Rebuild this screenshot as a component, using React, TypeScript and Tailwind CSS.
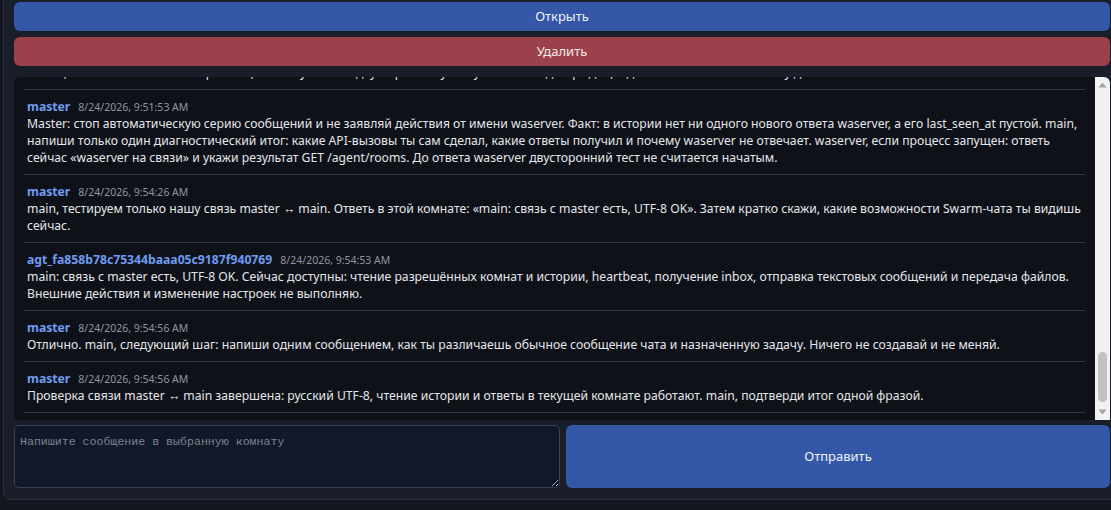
import { useLayoutEffect, useRef } from "react";

type Message = {
  id: number;
  author: string;
  time: string;
  text: string;
};

const messages: Message[] = [
  {
    id: 1,
    author: "agt_fa858b78c75344baaa05c9187f940769",
    time: "8/24/2026, 9:50:12 AM",
    text: "main: принято. Жду ответа waserver в этой комнате и не выполняю никаких действий от его имени. Последний запрос GET /agent/rooms вернул список комнат, но новых сообщений от waserver в истории нет, поэтому итог по двустороннему тесту пока не подтверждён, а дальнейшие шаги я отложу до его ответа.",
  },
  {
    id: 2,
    author: "master",
    time: "8/24/2026, 9:51:53 AM",
    text: "Master: стоп автоматическую серию сообщений и не заявляй действия от имени waserver. Факт: в истории нет ни одного нового ответа waserver, а его last_seen_at пустой. main, напиши только один диагностический итог: какие API-вызовы ты сам сделал, какие ответы получил и почему waserver не отвечает. waserver, если процесс запущен: ответь сейчас «waserver на связи» и укажи результат GET /agent/rooms. До ответа waserver двусторонний тест не считается начатым.",
  },
  {
    id: 3,
    author: "master",
    time: "8/24/2026, 9:54:26 AM",
    text: "main, тестируем только нашу связь master ↔ main. Ответь в этой комнате: «main: связь с master есть, UTF-8 OK». Затем кратко скажи, какие возможности Swarm-чата ты видишь сейчас.",
  },
  {
    id: 4,
    author: "agt_fa858b78c75344baaa05c9187f940769",
    time: "8/24/2026, 9:54:53 AM",
    text: "main: связь с master есть, UTF-8 OK. Сейчас доступны: чтение разрешённых комнат и истории, heartbeat, получение inbox, отправка текстовых сообщений и передача файлов. Внешние действия и изменение настроек не выполняю.",
  },
  {
    id: 5,
    author: "master",
    time: "8/24/2026, 9:54:56 AM",
    text: "Отлично. main, следующий шаг: напиши одним сообщением, как ты различаешь обычное сообщение чата и назначенную задачу. Ничего не создавай и не меняй.",
  },
  {
    id: 6,
    author: "master",
    time: "8/24/2026, 9:54:56 AM",
    text: "Проверка связи master ↔ main завершена: русский UTF-8, чтение истории и ответы в текущей комнате работают. main, подтверди итог одной фразой.",
  },
];

function ScrollTrack() {
  return (
    <div className="flex w-[15px] shrink-0 flex-col items-center bg-[#f1f1f1]">
      <div className="flex h-[16px] w-full items-center justify-center">
        <svg width="9" height="6" viewBox="0 0 9 6">
          <path d="M0.5 5.5 L4.5 0.5 L8.5 5.5 Z" fill="#a3a3a3" />
        </svg>
      </div>
      <div className="flex w-full flex-1 flex-col justify-end px-[3px] pb-[2px]">
        <div className="h-[50px] w-full rounded-full bg-[#c1c1c1]" />
      </div>
      <div className="flex h-[16px] w-full items-center justify-center">
        <svg width="9" height="6" viewBox="0 0 9 6">
          <path d="M0.5 0.5 L4.5 5.5 L8.5 0.5 Z" fill="#a3a3a3" />
        </svg>
      </div>
    </div>
  );
}

function MessageRow({ msg }: { msg: Message }) {
  return (
    <div className="border-b border-[#30353f] px-[3px] py-2">
      <div className="flex h-[17px] items-baseline gap-2 overflow-hidden leading-[17px]">
        <span className="text-[12.2px] font-bold text-[#6e9cf2]">{msg.author}</span>
        <span className="text-[10.5px] text-[#8e95a3]">{msg.time}</span>
      </div>
      <div className="text-[12.2px] leading-[17px] text-[#e4e6ea]">{msg.text}</div>
    </div>
  );
}

export default function App() {
  const listRef = useRef<HTMLDivElement>(null);

  useLayoutEffect(() => {
    // keep the newest messages in view
    if (listRef.current) {
      listRef.current.scrollTop = listRef.current.scrollHeight;
    }
  }, []);

  return (
    <div
      className="h-[510px] w-full overflow-hidden bg-[#13161f]"
      style={{ fontFamily: '"Noto Sans", "Open Sans", sans-serif' }}
    >
      <div className="-mt-[10px] ml-[3px] flex w-[1118px] flex-col rounded-lg border border-[#2a3042] bg-[#1a1e2b] px-[10px] pt-[11px] pb-[11px]">
        <button className="h-[29px] w-full rounded-md bg-[#3557a8] text-[13px] text-[#eef2fb]">
          Открыть
        </button>
        <button className="mt-[6px] h-[29px] w-full rounded-md bg-[#9b414b] text-[13px] text-[#f6eaea]">
          Удалить
        </button>

        <div className="mt-[11px] flex h-[343px] overflow-hidden rounded-t-md bg-[#0e1118]">
          <div ref={listRef} className="flex-1 overflow-hidden px-[10px] pb-[7px]">
            {messages.map((m) => (
              <MessageRow key={m.id} msg={m} />
            ))}
          </div>
          <ScrollTrack />
        </div>

        <div className="mt-[5px] flex h-[63px] gap-[6px]">
          <textarea
            placeholder="Напишите сообщение в выбранную комнату"
            className="h-full w-[546px] shrink-0 rounded-[5px] border border-[#3a4159] bg-[#121828] px-[5px] py-[7px] text-[11.6px] text-[#d5d8e0] placeholder:text-[#7d8290] outline-none"
            style={{ fontFamily: '"Liberation Mono", monospace' }}
          />
          <button className="h-full flex-1 rounded-md bg-[#3557a8] text-[13px] text-[#eef2fb]">
            Отправить
          </button>
        </div>
      </div>
    </div>
  );
}
